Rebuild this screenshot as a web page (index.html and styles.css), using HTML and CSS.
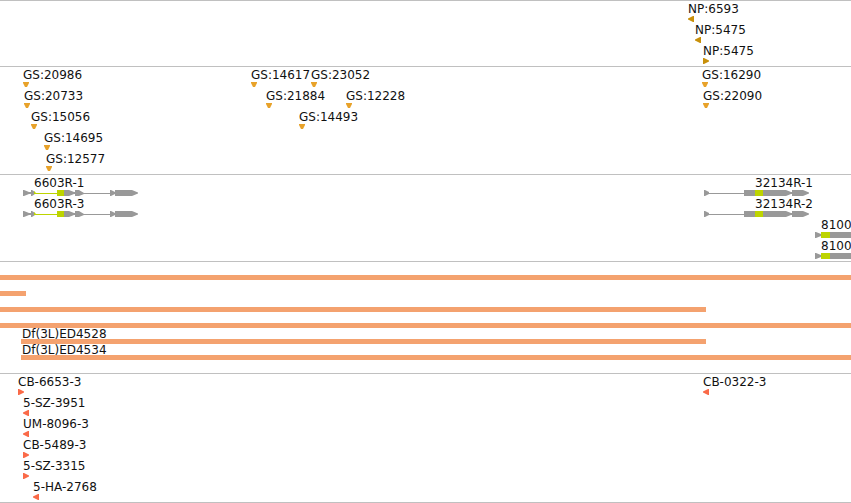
FILE: index.html
```html
<!DOCTYPE html>
<html lang="en">
<head>
<meta charset="utf-8">
<title>Genome map</title>
<link rel="stylesheet" href="styles.css">
</head>
<body>
<svg class="defs" aria-hidden="true">
  <symbol id="left" viewBox="0 0 6 6"><path d="M6 0V6H5L0 3.5V2.5L5 0Z"/></symbol>
  <symbol id="right" viewBox="0 0 6 6"><path d="M0 0V6H1L6 3.5V2.5L1 0Z"/></symbol>
  <symbol id="down" viewBox="0 0 6 5"><path d="M0 0H6V1L4 5H2L0 1Z"/></symbol>
  <symbol id="gene-a" viewBox="0 0 115 6">
    <path d="M0 0H1L6 2H8V0H9L12 2V4L9 6H8V4H6L1 6H0ZM41 0H46L51 2H52V0H56L61 3H87V0H88L92 2V0H109L115 2.5V3.5L109 6H92V4L88 6H87V4H61L56 6H52V4H51L46 6H41Z"/>
    <path class="probe" d="M11 1L13 3H34V0H41V6H34V4H11Z"/>
  </symbol>
  <symbol id="gene-b" viewBox="0 0 105 6">
    <path d="M0 0H1L5 2V3H40V0H82L87 2H88V0H99L105 2.5V3.5L99 6H88V4H87L82 6H40V4H5L1 6H0Z"/>
    <path class="probe" d="M51 0H59V6H51Z"/>
  </symbol>
  <symbol id="gene-c" viewBox="0 0 105 6">
    <path d="M0 0H1L6 2V0H105V6H6V4L1 6H0Z"/>
    <path class="probe" d="M6 0H15V6H6Z"/>
  </symbol>
</svg>
<main class="map">
  <section class="track np">
    <div class="row"><div class="feature" style="--x:688px"><span class="label">NP:6593</span><svg class="marker"><use href="#left"/></svg></div></div>
    <div class="row"><div class="feature" style="--x:695px"><span class="label">NP:5475</span><svg class="marker"><use href="#left"/></svg></div></div>
    <div class="row"><div class="feature" style="--x:703px"><span class="label">NP:5475</span><svg class="marker"><use href="#right"/></svg></div></div>
  </section>
  <section class="track gs">
    <div class="row">
      <div class="feature" style="--x:23px"><span class="label">GS:20986</span><svg class="marker down"><use href="#down"/></svg></div>
      <div class="feature" style="--x:251px"><span class="label">GS:14617</span><svg class="marker down"><use href="#down"/></svg></div>
      <div class="feature" style="--x:311px"><span class="label">GS:23052</span><svg class="marker down"><use href="#down"/></svg></div>
      <div class="feature" style="--x:702px"><span class="label">GS:16290</span><svg class="marker down"><use href="#down"/></svg></div>
    </div>
    <div class="row">
      <div class="feature" style="--x:24px"><span class="label">GS:20733</span><svg class="marker down"><use href="#down"/></svg></div>
      <div class="feature" style="--x:266px"><span class="label">GS:21884</span><svg class="marker down"><use href="#down"/></svg></div>
      <div class="feature" style="--x:346px"><span class="label">GS:12228</span><svg class="marker down"><use href="#down"/></svg></div>
      <div class="feature" style="--x:703px"><span class="label">GS:22090</span><svg class="marker down"><use href="#down"/></svg></div>
    </div>
    <div class="row">
      <div class="feature" style="--x:31px"><span class="label">GS:15056</span><svg class="marker down"><use href="#down"/></svg></div>
      <div class="feature" style="--x:299px"><span class="label">GS:14493</span><svg class="marker down"><use href="#down"/></svg></div>
    </div>
    <div class="row"><div class="feature" style="--x:44px"><span class="label">GS:14695</span><svg class="marker down"><use href="#down"/></svg></div></div>
    <div class="row"><div class="feature" style="--x:46px"><span class="label">GS:12577</span><svg class="marker down"><use href="#down"/></svg></div></div>
  </section>
  <section class="track rnai">
    <div class="row">
      <div class="feature" style="--x:23px;--label:11px"><span class="label">6603R-1</span><svg class="gene wide"><use href="#gene-a"/></svg></div>
      <div class="feature" style="--x:704px;--label:51px"><span class="label">32134R-1</span><svg class="gene"><use href="#gene-b"/></svg></div>
    </div>
    <div class="row">
      <div class="feature" style="--x:23px;--label:11px"><span class="label">6603R-3</span><svg class="gene wide"><use href="#gene-a"/></svg></div>
      <div class="feature" style="--x:704px;--label:51px"><span class="label">32134R-2</span><svg class="gene"><use href="#gene-b"/></svg></div>
    </div>
    <div class="row"><div class="feature" style="--x:815px;--label:6px"><span class="label">8100</span><svg class="gene"><use href="#gene-c"/></svg></div></div>
    <div class="row"><div class="feature" style="--x:815px;--label:6px"><span class="label">8100</span><svg class="gene"><use href="#gene-c"/></svg></div></div>
  </section>
  <section class="track deletions">
    <div class="lane"><div class="bar"></div></div>
    <div class="lane"><div class="bar" style="width:26px"></div></div>
    <div class="lane"><div class="bar" style="width:706px"></div></div>
    <div class="lane"><div class="bar"></div></div>
    <div class="lane" style="--x:21px"><span class="label">Df(3L)ED4528</span><div class="bar" style="width:685px"></div></div>
    <div class="lane" style="--x:21px"><span class="label">Df(3L)ED4534</span><div class="bar"></div></div>
  </section>
  <section class="track inserts">
    <div class="row">
      <div class="feature" style="--x:18px"><span class="label">CB-6653-3</span><svg class="marker"><use href="#right"/></svg></div>
      <div class="feature" style="--x:703px"><span class="label">CB-0322-3</span><svg class="marker"><use href="#left"/></svg></div>
    </div>
    <div class="row"><div class="feature" style="--x:23px"><span class="label">5-SZ-3951</span><svg class="marker"><use href="#left"/></svg></div></div>
    <div class="row"><div class="feature" style="--x:23px"><span class="label">UM-8096-3</span><svg class="marker"><use href="#left"/></svg></div></div>
    <div class="row"><div class="feature" style="--x:23px"><span class="label">CB-5489-3</span><svg class="marker"><use href="#right"/></svg></div></div>
    <div class="row"><div class="feature" style="--x:23px"><span class="label">5-SZ-3315</span><svg class="marker"><use href="#right"/></svg></div></div>
    <div class="row"><div class="feature" style="--x:33px"><span class="label">5-HA-2768</span><svg class="marker"><use href="#left"/></svg></div></div>
  </section>
</main>
</body>
</html>
```
FILE: styles.css
```css
body {
  margin: 0;
  background: #fff;
  color: #111;
  font-family: "DejaVu Sans", sans-serif;
  font-size: 12px;
}

.defs {
  display: none;
}

.map {
  overflow: hidden;
  border-bottom: 1px solid #c0c0c0;
}

.track {
  border-top: 1px solid #c0c0c0;
  padding-bottom: 2px;
}

/* Features on a row share one grid cell; --x is the map position. */
.row {
  display: grid;
  grid-template-columns: minmax(0, 1fr);
}

.feature {
  grid-area: 1 / 1;
  justify-self: start;
  margin-left: var(--x);
  height: 21px;
  white-space: nowrap;
}

.label {
  display: block;
  padding-top: 1px;
  line-height: 14px;
  margin-left: var(--label, 0);
}

.marker {
  display: block;
  width: 6px;
  height: 6px;
}

.marker.down {
  height: 5px;
}

.np { fill: #c8900a; }
.gs { fill: #e8a22a; }
.rnai { fill: #999; }
.inserts { fill: #fa6a48; }

.gene {
  display: block;
  width: 105px;
  height: 6px;
}

.gene.wide {
  width: 115px;
}

.probe {
  fill: #bdd400;
}

.deletions {
  padding-top: 2px;
  padding-bottom: 13px;
}

.lane {
  display: flex;
  flex-direction: column;
  justify-content: flex-end;
  height: 16px;
  padding-left: var(--x, 0);
}

.lane .label {
  padding-top: 0;
  padding-left: 1px;
  line-height: 9px;
}

.bar {
  height: 5px;
  background: #f4a26f;
}
```
